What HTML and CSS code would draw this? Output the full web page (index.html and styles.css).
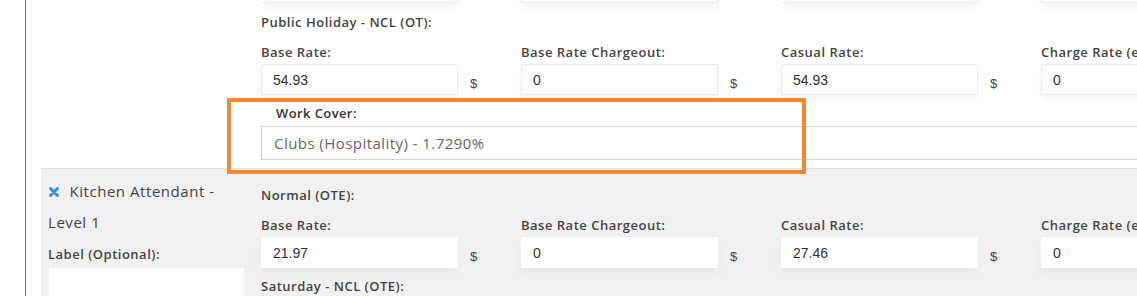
FILE: index.html
```html
<!DOCTYPE html>
<html>

<head>
    <meta charset="utf-8">
    <meta name="viewport" content="width=device-width,initial-scale=1.0">
    <title>Award rates</title>
    <link rel="stylesheet" href="styles.css">
</head>

<body>
    <div class="frame">
        <div class="row first">
            <div class="side"></div>
            <div class="rates">
                <div class="fields stub">
                    <div class="field"><div class="control"><input type="text" value=""></div></div>
                    <div class="field"><div class="control"><input type="text" value=""></div></div>
                    <div class="field"><div class="control"><input type="text" value=""></div></div>
                    <div class="field"><div class="control"><input type="text" value=""></div></div>
                </div>
                <div class="heading">Public Holiday - NCL (OT):</div>
                <div class="fields">
                    <div class="field">
                        <label>Base Rate:</label>
                        <div class="control"><input type="text" value="54.93"><span class="unit">$</span></div>
                    </div>
                    <div class="field">
                        <label>Base Rate Chargeout:</label>
                        <div class="control"><input type="text" value="0"><span class="unit">$</span></div>
                    </div>
                    <div class="field">
                        <label>Casual Rate:</label>
                        <div class="control"><input type="text" value="54.93"><span class="unit">$</span></div>
                    </div>
                    <div class="field">
                        <label>Charge Rate (ex GST):</label>
                        <div class="control"><input type="text" value="0"><span class="unit">$</span></div>
                    </div>
                </div>
                <div class="workcover">
                    <label>Work Cover:</label>
                    <div class="select">Clubs (Hospitality) - 1.7290%</div>
                </div>
            </div>
        </div>

        <div class="row alt">
            <div class="side">
                <div class="item-name">
                    <svg class="remove" width="10" height="10" viewBox="0 0 10 10">
                        <path d="M1.6 1.6 L8.4 8.4 M8.4 1.6 L1.6 8.4" stroke="#3b8ee0" stroke-width="3" stroke-linecap="round" fill="none"/>
                    </svg>
                    Kitchen Attendant -<br>Level 1
                </div>
                <label class="side-label">Label (Optional):</label>
                <input type="text" class="side-input" value="">
            </div>
            <div class="rates">
                <div class="heading">Normal (OTE):</div>
                <div class="fields">
                    <div class="field">
                        <label>Base Rate:</label>
                        <div class="control"><input type="text" value="21.97"><span class="unit">$</span></div>
                    </div>
                    <div class="field">
                        <label>Base Rate Chargeout:</label>
                        <div class="control"><input type="text" value="0"><span class="unit">$</span></div>
                    </div>
                    <div class="field">
                        <label>Casual Rate:</label>
                        <div class="control"><input type="text" value="27.46"><span class="unit">$</span></div>
                    </div>
                    <div class="field">
                        <label>Charge Rate (ex GST):</label>
                        <div class="control"><input type="text" value="0"><span class="unit">$</span></div>
                    </div>
                </div>
                <div class="heading">Saturday - NCL (OTE):</div>
            </div>
        </div>
    </div>

    <div class="highlight"></div>
</body>

</html>
```

FILE: styles.css
```css
html,
body {
    margin: 0;
    padding: 0;
    height: 100%;
}

body {
    font-family: "Open Sans", "Liberation Sans", sans-serif;
    color: #444;
    overflow: hidden;
    background: #fff;
}

.frame {
    margin-left: 25px;
    border-left: 1px solid #3a8ee0;
    padding-left: 15px;
    min-height: 100%;
}

.row {
    display: flex;
}

.row.first {
    margin-top: -28px;
    padding-bottom: 8px;
}

.row.alt {
    background: #f1f1f1;
    border-top: 1px solid #dde1e5;
    min-height: 200px;
}

.side {
    width: 220px;
    flex: none;
    box-sizing: border-box;
    padding-left: 7px;
}

.rates {
    width: 1040px;
    flex: none;
}

.row.alt .rates {
    padding-top: 16px;
}

.heading {
    font-size: 13px;
    font-weight: 600;
    line-height: 20px;
    letter-spacing: 0.5px;
    margin: 9px 0 10px;
}

.row.alt .heading {
    margin-top: 0;
}

.row.alt .fields + .heading {
    margin-top: 8px;
}

.fields {
    display: flex;
}

.field {
    width: 260px;
    flex: none;
}

.field label {
    display: block;
    font-size: 13px;
    font-weight: 600;
    line-height: 20px;
    letter-spacing: 0.5px;
    margin-bottom: 2px;
}

.control {
    display: flex;
    align-items: flex-end;
}

.control input {
    width: 197px;
    height: 31px;
    box-sizing: border-box;
    margin: 0;
    border: 1px solid #ececec;
    padding: 0 11px;
    font: 14px "Liberation Sans", Arial, sans-serif;
    color: #333;
    background: #fff;
    box-shadow: 0 6px 10px rgba(0, 0, 0, 0.035);
    outline: none;
}

.row.alt .control input {
    border-color: #fff;
}

.unit {
    margin-left: 12px;
    font: 13px "Liberation Sans", Arial, sans-serif;
    line-height: 20px;
    padding-bottom: 1px;
}

.workcover {
    margin-top: 8px;
}

.workcover label {
    display: block;
    margin-left: 15px;
    font-size: 13px;
    font-weight: 600;
    line-height: 20px;
    letter-spacing: 0.4px;
    color: #333;
    margin-bottom: 3px;
}

.select {
    height: 34px;
    box-sizing: border-box;
    border: 1px solid #d3d6da;
    padding-left: 12px;
    font-size: 15px;
    line-height: 32px;
    letter-spacing: 0.45px;
    color: #666;
    background: #fff;
}

.item-name {
    padding-top: 7px;
    font-size: 15px;
    line-height: 31px;
    letter-spacing: 0.55px;
    color: #444;
}

.remove {
    margin: 0 6px 0 1px;
}

.side-label {
    display: block;
    margin-top: 6px;
    font-size: 13px;
    font-weight: 600;
    line-height: 20px;
    letter-spacing: 0.5px;
}

.side-input {
    display: block;
    width: 195px;
    height: 40px;
    margin: 4px 0 0 1px;
    box-sizing: border-box;
    border: none;
    background: #fff;
}

.highlight {
    position: absolute;
    left: 227px;
    top: 98px;
    width: 579px;
    height: 76px;
    box-sizing: border-box;
    border: 4px solid #f5882f;
}
```
